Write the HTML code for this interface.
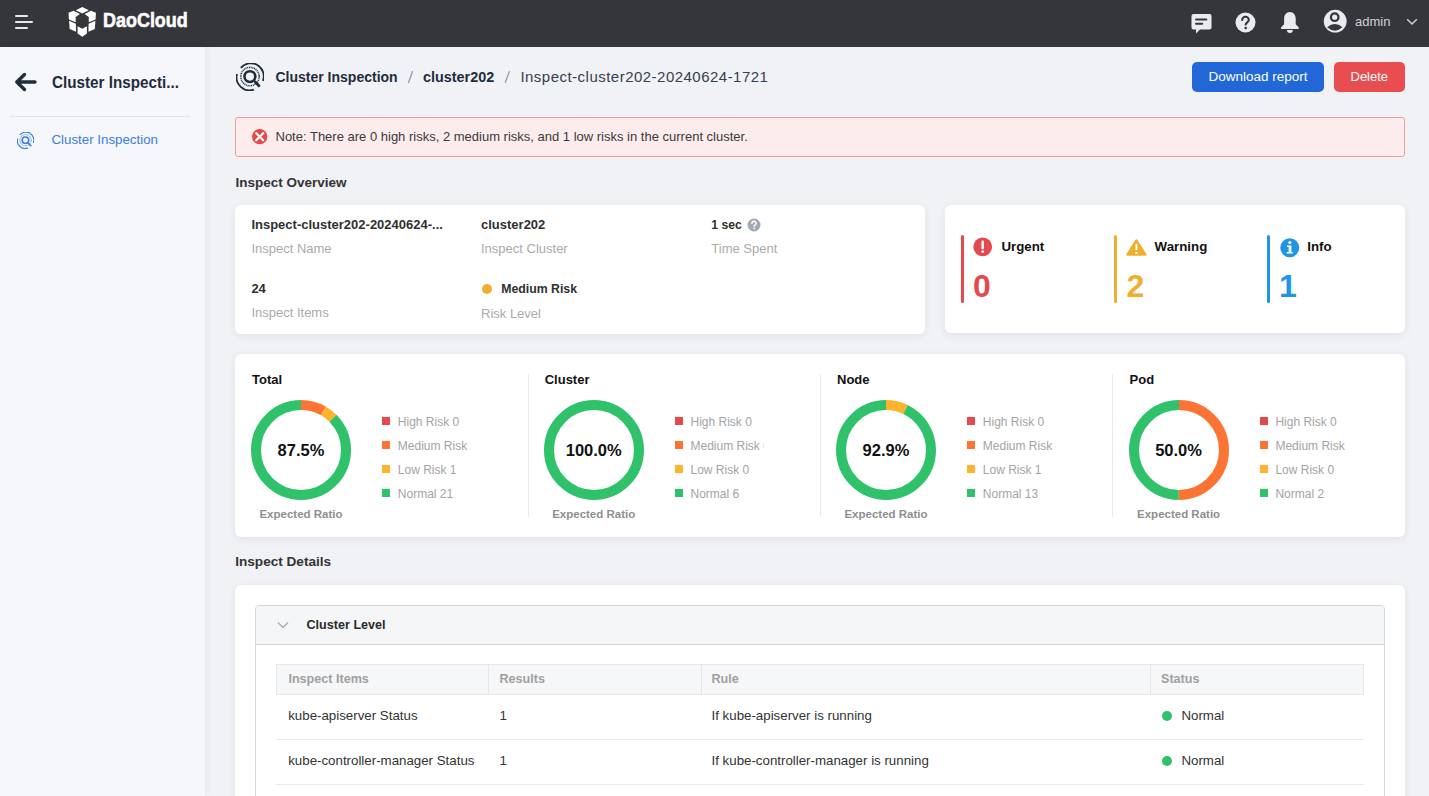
<!DOCTYPE html>
<html><head><meta charset="utf-8">
<style>
*{box-sizing:border-box;margin:0;padding:0}
html,body{width:1429px;height:796px;overflow:hidden;background:#f1f2f6;font-family:"Liberation Sans",sans-serif;position:relative}
.a{position:absolute}
.t{position:absolute;line-height:1;white-space:nowrap}
.b{font-weight:700}
#top{left:0;top:0;width:1429px;height:47px;background:#35363b}
#side{left:0;top:47px;width:205px;height:749px;background:#f6f7fb;box-shadow:2px 0 8px rgba(0,0,0,.05)}
.card{position:absolute;background:#fff;border-radius:6px;box-shadow:0 2px 8px rgba(30,40,60,.08)}
.lg{position:absolute;width:8px;height:8px}
.lt{position:absolute;line-height:1.3;white-space:nowrap;font-size:12px;color:#a3a3a3;overflow:hidden}
.div{position:absolute;width:1px;background:#e9eaee;top:374px;height:143px}
</style></head><body>

<!-- TOP BAR -->
<div id="top" class="a">
  <div class="a" style="left:15px;top:15px;width:13px;height:2px;background:#e6e8ec;border-radius:1px"></div>
  <div class="a" style="left:15px;top:21px;width:18px;height:2px;background:#e6e8ec;border-radius:1px"></div>
  <div class="a" style="left:15px;top:27px;width:13px;height:2px;background:#e6e8ec;border-radius:1px"></div>
  <svg class="a" style="left:64px;top:4px" width="36" height="36" viewBox="0 0 796 796">
    <g fill="#fff">
    <polygon points="405,68 550,138 405,210 260,138"/>
    <polygon points="100,192 210,150 352,222 258,285 258,402 108,340"/>
    <polygon points="706,192 596,150 454,222 548,285 548,402 698,340"/>
    <polygon points="112,372 262,436 266,612 125,552"/>
    <polygon points="694,372 544,436 540,612 681,552"/>
    <polygon points="300,492 405,550 506,492 506,652 405,722 300,652"/>
    </g>
  </svg>
  <div class="t b" style="left:103.3px;top:9.3px;font-size:21px;color:#fff;-webkit-text-stroke:0.6px #fff;transform:scaleX(0.855);transform-origin:0 0">DaoCloud</div>

  <!-- chat -->
  <svg class="a" style="left:1191.1px;top:13px" width="22" height="21" viewBox="0 0 22 21">
    <path d="M2.5 1h16a2 2 0 0 1 2 2v11.5a2 2 0 0 1-2 2H9l-4 4v-4h-2.5a2 2 0 0 1-2-2V3a2 2 0 0 1 2-2z" fill="#e8ebf0"/>
    <rect x="4" y="5.5" width="12.3" height="2" rx="1" fill="#35363b"/>
    <rect x="4" y="9.8" width="8.2" height="2" rx="1" fill="#35363b"/>
  </svg>
  <!-- help -->
  <svg class="a" style="left:1235px;top:12px" width="21" height="21" viewBox="0 0 21 21">
    <circle cx="10.5" cy="10.5" r="10" fill="#e8ebf0"/>
    <path d="M7.2 8a3.3 3.3 0 0 1 6.6 0c0 2.2-3.1 2.4-3.1 4.6" stroke="#35363b" stroke-width="2.1" fill="none" stroke-linecap="round"/>
    <circle cx="10.7" cy="16" r="1.3" fill="#35363b"/>
  </svg>
  <!-- bell -->
  <svg class="a" style="left:1280px;top:12px" width="20" height="22" viewBox="0 0 20 22">
    <path d="M9.9 0C13.5 0 15.7 3 15.7 6.8V12.3L18.6 15.3C19.3 16 18.9 16.9 17.9 16.9H1.9C0.9 16.9 0.5 16 1.2 15.3L4.1 12.3V6.8C4.1 3 6.3 0 9.9 0Z" fill="#e8ebf0"/>
    <path d="M7 18H12.8A2.9 2.9 0 0 1 7 18Z" fill="#e8ebf0"/>
  </svg>
  <!-- user -->
  <svg class="a" style="left:1323px;top:9px" width="24" height="25" viewBox="0 0 24 25">
    <circle cx="12.2" cy="12.2" r="11.4" fill="#e8ebf0"/>
    <circle cx="11.7" cy="8.2" r="3.75" fill="none" stroke="#35363b" stroke-width="2.3"/>
    <path d="M4.1 18.3Q11.8 11.6 19.5 18.3Q11.8 25 4.1 18.3Z" fill="#35363b"/>
  </svg>
  <div class="t" style="left:1355px;top:14.6px;font-size:13px;color:#d0d2d6">admin</div>
  <svg class="a" style="left:1406px;top:18px" width="12" height="8" viewBox="0 0 12 8">
    <path d="M1.2 1.2l4.8 4.8l4.8-4.8" stroke="#d0d2d6" stroke-width="1.5" fill="none"/>
  </svg>
</div>

<!-- SIDEBAR -->
<div id="side" class="a">
  <svg class="a" style="left:14px;top:25px" width="23" height="20" viewBox="0 0 23 20">
    <path d="M21 10H3.5M10.5 2.5L2.8 10l7.7 7.5" stroke="#1e2d3d" stroke-width="3.4" fill="none" stroke-linecap="round" stroke-linejoin="round"/>
  </svg>
  <div class="t b" style="left:51.7px;top:26.6px;font-size:16.4px;color:#1e2d3d;transform:scaleX(0.929);transform-origin:0 0">Cluster Inspecti...</div>
  <div class="a" style="left:10px;top:69px;width:180px;height:1px;background:#e2e4e9"></div>
  <svg class="a" style="left:16.5px;top:85px" width="17" height="17" viewBox="0 0 28 28">
    <g fill="none" stroke="#3a7ddc">
      <path d="M4.8 4.9A13 13 0 0 1 26.9 17.9" stroke-width="1.9"/>
      <path d="M1 11A13 13 0 0 0 17.9 26.6" stroke-width="1.9"/>
      <circle cx="14" cy="13.6" r="9.3" stroke-width="1.5" stroke-dasharray="1.1 0.9"/>
      <circle cx="13.9" cy="13.6" r="5.4" stroke-width="2.6"/>
      <path d="M19.3 19l3.5 3.6" stroke-width="2.8" stroke-linecap="round"/>
    </g>
  </svg>
  <div class="t" style="left:51.5px;top:86.2px;font-size:13.3px;color:#3a7ddc">Cluster Inspection</div>
</div>

<!-- BREADCRUMB -->
<svg class="a" style="left:236px;top:63px" width="28" height="28" viewBox="0 0 28 28">
  <g fill="none" stroke="#1e2d3d">
    <path d="M4.8 4.9A13 13 0 0 1 26.9 17.9" stroke-width="1.8"/>
    <path d="M1 11A13 13 0 0 0 17.9 26.6" stroke-width="1.8"/>
    <circle cx="14" cy="13.6" r="9.2" stroke-width="1.6" stroke-dasharray="1 0.75"/>
    <circle cx="13.9" cy="13.6" r="5.4" stroke-width="2.6"/>
    <path d="M19.3 19l3.6 3.7" stroke-width="2.8" stroke-linecap="round"/>
  </g>
</svg>
<div class="t b" style="left:275.5px;top:69.7px;font-size:14px;color:#1e2d3d">Cluster Inspection</div>
<svg class="a" style="left:405px;top:68px" width="12" height="18" viewBox="0 0 12 18"><path d="M3.6 14.5L7.4 3.5" stroke="#959595" stroke-width="1.25" stroke-linecap="round"/></svg>
<div class="t b" style="left:423px;top:69.7px;font-size:14.4px;color:#1e2d3d">cluster202</div>
<svg class="a" style="left:502px;top:68px" width="12" height="18" viewBox="0 0 12 18"><path d="M3.3 14.4L7.3 3.6" stroke="#959595" stroke-width="1.25" stroke-linecap="round"/></svg>
<div class="t" style="left:520.4px;top:69.4px;font-size:15px;letter-spacing:0.48px;color:#34404e">Inspect-cluster202-20240624-1721</div>

<!-- BUTTONS -->
<div class="a" style="left:1192px;top:62px;width:132px;height:30px;background:#2167d8;border-radius:5px"></div>
<div class="t" style="left:1208.5px;top:69.6px;font-size:13.5px;color:#fff">Download report</div>
<div class="a" style="left:1334px;top:62px;width:71px;height:30px;background:#e84e50;border-radius:5px"></div>
<div class="t" style="left:1350.5px;top:69.6px;font-size:13px;color:#fff">Delete</div>

<!-- ALERT -->
<div class="a" style="left:235px;top:117px;width:1170px;height:40px;background:#fdecec;border:1px solid #f19c9c;border-radius:3px"></div>
<svg class="a" style="left:251.5px;top:129.3px" width="16" height="16" viewBox="0 0 16 16">
  <circle cx="7.7" cy="7.7" r="7.6" fill="#e5484d"/>
  <path d="M4.2 4.2L11.2 11.2M11.2 4.2L4.2 11.2" stroke="#fff" stroke-width="2.2" stroke-linecap="round"/>
</svg>
<div class="t" style="left:275.5px;top:129.8px;font-size:13px;color:#3a3a3a">Note: There are 0 high risks, 2 medium risks, and 1 low risks in the current cluster.</div>

<!-- OVERVIEW -->
<div class="t b" style="left:235.5px;top:175.9px;font-size:13.5px;color:#333">Inspect Overview</div>

<div class="card" style="left:235px;top:205px;width:690px;height:129px"></div>
<div class="t b" style="left:251.4px;top:217.6px;font-size:13px;color:#303030">Inspect-cluster202-20240624-...</div>
<div class="t" style="left:251.4px;top:241.7px;font-size:13px;color:#aaa">Inspect Name</div>
<div class="t b" style="left:481px;top:217.6px;font-size:13px;color:#303030">cluster202</div>
<div class="t" style="left:481px;top:241.7px;font-size:13px;color:#aaa">Inspect Cluster</div>
<div class="t b" style="left:711.3px;top:218.9px;font-size:12.2px;color:#303030">1 sec</div>
<svg class="a" style="left:746.5px;top:217.8px" width="14" height="14" viewBox="0 0 14 14">
  <circle cx="7" cy="7" r="6.5" fill="#a3aab4"/>
  <path d="M4.9 5.4a2.1 2.1 0 0 1 4.2 0c0 1.4-2 1.5-2 2.9" stroke="#fff" stroke-width="1.4" fill="none" stroke-linecap="round"/>
  <circle cx="7.1" cy="10.3" r="0.85" fill="#fff"/>
</svg>
<div class="t" style="left:711.3px;top:241.7px;font-size:13px;color:#aaa">Time Spent</div>
<div class="t b" style="left:251.4px;top:281.6px;font-size:13px;color:#303030">24</div>
<div class="t" style="left:251.4px;top:305.8px;font-size:13px;color:#aaa">Inspect Items</div>
<div class="a" style="left:482px;top:284px;width:10px;height:10px;border-radius:50%;background:#f0ae2f"></div>
<div class="t b" style="left:501.2px;top:282.6px;font-size:12.3px;color:#303030">Medium Risk</div>
<div class="t" style="left:481px;top:306.8px;font-size:13px;color:#aaa">Risk Level</div>

<!-- RISK CARD -->
<div class="card" style="left:945px;top:205px;width:460px;height:128px"></div>
<div class="a" style="left:961px;top:235px;width:3px;height:68px;background:#e5484d;border-radius:2px"></div>
<div class="a" style="left:1114px;top:235px;width:3px;height:68px;background:#f0ae2f;border-radius:2px"></div>
<div class="a" style="left:1267px;top:235px;width:3px;height:68px;background:#1f95e6;border-radius:2px"></div>
<svg class="a" style="left:973px;top:237.1px" width="20" height="20" viewBox="0 0 20 20">
  <circle cx="9.7" cy="9.8" r="9.4" fill="#e5484d"/>
  <path d="M9.7 4.8v6.2" stroke="#fff" stroke-width="2.6" stroke-linecap="round"/>
  <circle cx="9.7" cy="14.6" r="1.4" fill="#fff"/>
</svg>
<svg class="a" style="left:1125.5px;top:238px" width="21" height="18" viewBox="0 0 21 18">
  <path d="M10.4 2.3L19.4 16.7H1.4z" fill="#f0ae2f" stroke="#f0ae2f" stroke-width="2.2" stroke-linejoin="round"/>
  <path d="M10.4 6.8v4.4" stroke="#fff" stroke-width="2" stroke-linecap="round"/>
  <rect x="9.4" y="13.9" width="2" height="2" rx="0.5" fill="#fff"/>
</svg>
<svg class="a" style="left:1279.5px;top:237.5px" width="20" height="20" viewBox="0 0 20 20">
  <circle cx="9.76" cy="9.78" r="9.5" fill="#1f95e6"/>
  <circle cx="9.86" cy="4.5" r="1.55" fill="#fff"/>
  <path d="M7 7.4H11.4V13.9H12.7V15.4H6.7V13.9H8.7V8.9H7z" fill="#fff"/>
</svg>
<div class="t b" style="left:1001.4px;top:239.6px;font-size:13.3px;color:#111">Urgent</div>
<div class="t b" style="left:1154.6px;top:239.6px;font-size:13.3px;color:#111">Warning</div>
<div class="t b" style="left:1307.2px;top:239.6px;font-size:13.3px;color:#111">Info</div>
<div class="t b" style="left:973px;top:270.4px;font-size:32px;color:#e5484d">0</div>
<div class="t b" style="left:1126.5px;top:270.4px;font-size:32px;color:#f0ae2f">2</div>
<div class="t b" style="left:1279px;top:270.4px;font-size:32px;color:#1f95e6">1</div>

<!-- CHARTS CARD -->
<div class="card" style="left:235px;top:354px;width:1170px;height:183px"></div>
<div class="div" style="left:528px"></div>
<div class="div" style="left:820px"></div>
<div class="div" style="left:1112px"></div>

<div id="charts"><div class="t b" style="left:252.0px;top:373.3px;font-size:13px;color:#111">Total</div>
<svg class="a" style="left:251.0px;top:399.8px" width="100" height="100" viewBox="0 0 100 100"><g transform="rotate(-90 50 50)"><circle cx="50" cy="50" r="45" fill="none" stroke="#fc7433" stroke-width="10" stroke-dasharray="23.562 282.743" stroke-dashoffset="0.000"/><circle cx="50" cy="50" r="45" fill="none" stroke="#fdb42c" stroke-width="10" stroke-dasharray="11.781 282.743" stroke-dashoffset="-23.562"/><circle cx="50" cy="50" r="45" fill="none" stroke="#2fc26b" stroke-width="10" stroke-dasharray="247.400 282.743" stroke-dashoffset="-35.343"/></g></svg>
<div class="t b" style="left:251.0px;width:100px;text-align:center;top:441.6px;font-size:16.5px;color:#111">87.5%</div>
<div class="t b" style="left:241.0px;width:120px;text-align:center;top:508.7px;font-size:11.5px;color:#8f8f8f">Expected Ratio</div>
<div class="lg" style="left:382.0px;top:417.0px;background:#e5484d"></div>
<div class="lt" style="left:397.8px;top:414.9px;width:73px">High Risk 0</div>
<div class="lg" style="left:382.0px;top:441.0px;background:#fc7433"></div>
<div class="lt" style="left:397.8px;top:438.9px;width:73px">Medium Risk 2</div>
<div class="lg" style="left:382.0px;top:465.0px;background:#fdb42c"></div>
<div class="lt" style="left:397.8px;top:462.9px;width:73px">Low Risk 1</div>
<div class="lg" style="left:382.0px;top:489.0px;background:#2fc26b"></div>
<div class="lt" style="left:397.8px;top:486.9px;width:73px">Normal 21</div>
<div class="t b" style="left:544.7px;top:373.3px;font-size:13px;color:#111">Cluster</div>
<svg class="a" style="left:543.7px;top:399.8px" width="100" height="100" viewBox="0 0 100 100"><g transform="rotate(-90 50 50)"><circle cx="50" cy="50" r="45" fill="none" stroke="#2fc26b" stroke-width="10" stroke-dasharray="282.743 282.743" stroke-dashoffset="0.000"/></g></svg>
<div class="t b" style="left:543.7px;width:100px;text-align:center;top:441.6px;font-size:16.5px;color:#111">100.0%</div>
<div class="t b" style="left:533.7px;width:120px;text-align:center;top:508.7px;font-size:11.5px;color:#8f8f8f">Expected Ratio</div>
<div class="lg" style="left:674.7px;top:417.0px;background:#e5484d"></div>
<div class="lt" style="left:690.5px;top:414.9px;width:73px">High Risk 0</div>
<div class="lg" style="left:674.7px;top:441.0px;background:#fc7433"></div>
<div class="lt" style="left:690.5px;top:438.9px;width:73px">Medium Risk 0</div>
<div class="lg" style="left:674.7px;top:465.0px;background:#fdb42c"></div>
<div class="lt" style="left:690.5px;top:462.9px;width:73px">Low Risk 0</div>
<div class="lg" style="left:674.7px;top:489.0px;background:#2fc26b"></div>
<div class="lt" style="left:690.5px;top:486.9px;width:73px">Normal 6</div>
<div class="t b" style="left:837.0px;top:373.3px;font-size:13px;color:#111">Node</div>
<svg class="a" style="left:836.0px;top:399.8px" width="100" height="100" viewBox="0 0 100 100"><g transform="rotate(-90 50 50)"><circle cx="50" cy="50" r="45" fill="none" stroke="#fdb42c" stroke-width="10" stroke-dasharray="20.196 282.743" stroke-dashoffset="0.000"/><circle cx="50" cy="50" r="45" fill="none" stroke="#2fc26b" stroke-width="10" stroke-dasharray="262.547 282.743" stroke-dashoffset="-20.196"/></g></svg>
<div class="t b" style="left:836.0px;width:100px;text-align:center;top:441.6px;font-size:16.5px;color:#111">92.9%</div>
<div class="t b" style="left:826.0px;width:120px;text-align:center;top:508.7px;font-size:11.5px;color:#8f8f8f">Expected Ratio</div>
<div class="lg" style="left:967.0px;top:417.0px;background:#e5484d"></div>
<div class="lt" style="left:982.8px;top:414.9px;width:73px">High Risk 0</div>
<div class="lg" style="left:967.0px;top:441.0px;background:#fc7433"></div>
<div class="lt" style="left:982.8px;top:438.9px;width:73px">Medium Risk 0</div>
<div class="lg" style="left:967.0px;top:465.0px;background:#fdb42c"></div>
<div class="lt" style="left:982.8px;top:462.9px;width:73px">Low Risk 1</div>
<div class="lg" style="left:967.0px;top:489.0px;background:#2fc26b"></div>
<div class="lt" style="left:982.8px;top:486.9px;width:73px">Normal 13</div>
<div class="t b" style="left:1129.6px;top:373.3px;font-size:13px;color:#111">Pod</div>
<svg class="a" style="left:1128.6px;top:399.8px" width="100" height="100" viewBox="0 0 100 100"><g transform="rotate(-90 50 50)"><circle cx="50" cy="50" r="45" fill="none" stroke="#fc7433" stroke-width="10" stroke-dasharray="141.372 282.743" stroke-dashoffset="0.000"/><circle cx="50" cy="50" r="45" fill="none" stroke="#2fc26b" stroke-width="10" stroke-dasharray="141.372 282.743" stroke-dashoffset="-141.372"/></g></svg>
<div class="t b" style="left:1128.6px;width:100px;text-align:center;top:441.6px;font-size:16.5px;color:#111">50.0%</div>
<div class="t b" style="left:1118.6px;width:120px;text-align:center;top:508.7px;font-size:11.5px;color:#8f8f8f">Expected Ratio</div>
<div class="lg" style="left:1259.6px;top:417.0px;background:#e5484d"></div>
<div class="lt" style="left:1275.4px;top:414.9px;width:73px">High Risk 0</div>
<div class="lg" style="left:1259.6px;top:441.0px;background:#fc7433"></div>
<div class="lt" style="left:1275.4px;top:438.9px;width:73px">Medium Risk 2</div>
<div class="lg" style="left:1259.6px;top:465.0px;background:#fdb42c"></div>
<div class="lt" style="left:1275.4px;top:462.9px;width:73px">Low Risk 0</div>
<div class="lg" style="left:1259.6px;top:489.0px;background:#2fc26b"></div>
<div class="lt" style="left:1275.4px;top:486.9px;width:73px">Normal 2</div></div><!--/charts-->

<!-- DETAILS -->
<div class="t b" style="left:235.2px;top:554.7px;font-size:13.6px;color:#333">Inspect Details</div>
<div class="card" style="left:235px;top:585px;width:1170px;height:260px"></div>
<div class="a" style="left:255px;top:605px;width:1130px;height:240px;border:1px solid #d3d8e0;border-radius:4px"></div>
<div class="a" style="left:256px;top:606px;width:1128px;height:39px;background:#f5f6f8;border-bottom:1px solid #d3d8e0;border-radius:3px 3px 0 0"></div>
<svg class="a" style="left:277px;top:620.8px" width="12" height="9" viewBox="0 0 12 9">
  <path d="M1 1.5l5 5l5-5" stroke="#a3aab4" stroke-width="1.3" fill="none"/>
</svg>
<div class="t b" style="left:306.5px;top:619px;font-size:12.6px;color:#2a2a2a">Cluster Level</div>

<div class="a" style="left:276px;top:664px;width:1088px;height:31px;background:#f6f7f9;border:1px solid #e4e7ec"></div>
<div class="a" style="left:488px;top:665px;width:1px;height:29px;background:#e4e7ec"></div>
<div class="a" style="left:701px;top:665px;width:1px;height:29px;background:#e4e7ec"></div>
<div class="a" style="left:1150px;top:665px;width:1px;height:29px;background:#e4e7ec"></div>
<div class="t b" style="left:288.4px;top:672.9px;font-size:12.6px;color:#a0a0a0">Inspect Items</div>
<div class="t b" style="left:499.5px;top:672.9px;font-size:12.6px;color:#a0a0a0">Results</div>
<div class="t b" style="left:711.5px;top:672.9px;font-size:12.6px;color:#a0a0a0">Rule</div>
<div class="t b" style="left:1161px;top:672.9px;font-size:12.6px;color:#a0a0a0">Status</div>

<div class="t" style="left:288.2px;top:708.7px;font-size:13.3px;color:#333">kube-apiserver Status</div>
<div class="t" style="left:499.5px;top:708.7px;font-size:13.3px;color:#333">1</div>
<div class="t" style="left:711.5px;top:708.7px;font-size:13.3px;color:#333">If kube-apiserver is running</div>
<div class="a" style="left:1162px;top:711.4px;width:10px;height:10px;border-radius:50%;background:#2fc26b"></div>
<div class="t" style="left:1181.4px;top:708.7px;font-size:13.3px;color:#333">Normal</div>
<div class="a" style="left:276px;top:739px;width:1088px;height:1px;background:#e8eaee"></div>

<div class="t" style="left:288.2px;top:753.7px;font-size:13.3px;color:#333">kube-controller-manager Status</div>
<div class="t" style="left:499.5px;top:753.7px;font-size:13.3px;color:#333">1</div>
<div class="t" style="left:711.5px;top:753.7px;font-size:13.3px;color:#333">If kube-controller-manager is running</div>
<div class="a" style="left:1162px;top:756.4px;width:10px;height:10px;border-radius:50%;background:#2fc26b"></div>
<div class="t" style="left:1181.4px;top:753.7px;font-size:13.3px;color:#333">Normal</div>
<div class="a" style="left:276px;top:784px;width:1088px;height:1px;background:#e8eaee"></div>

</body></html>
